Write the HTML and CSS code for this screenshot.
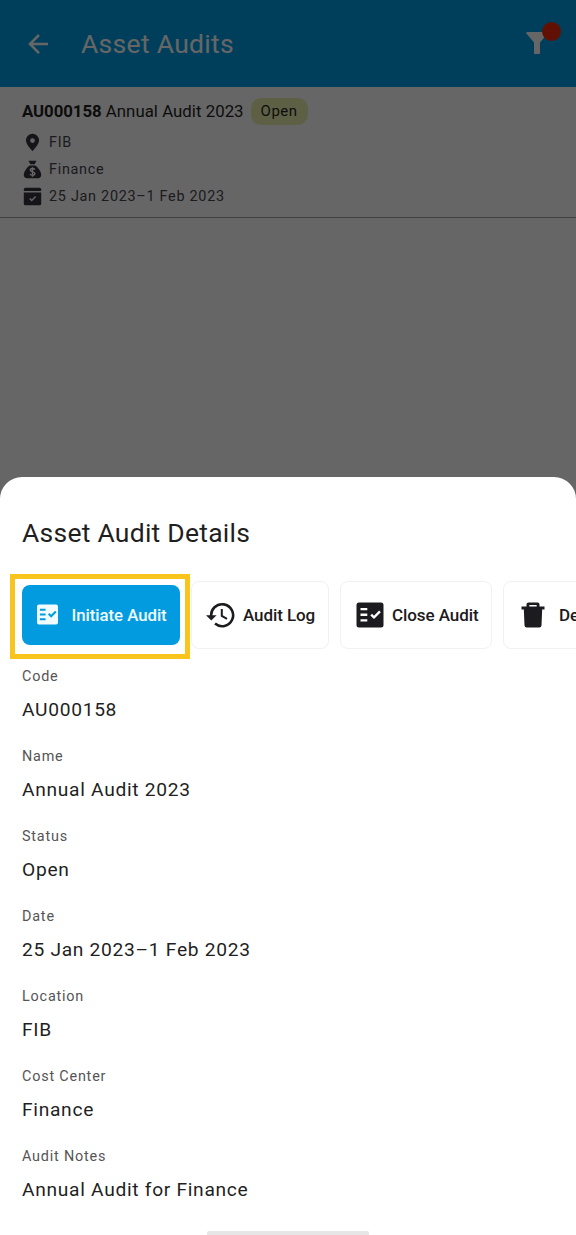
FILE: index.html
```html
<!DOCTYPE html>
<html lang="en">
<head>
<meta charset="utf-8">
<title>Asset Audits</title>
<link rel="stylesheet" href="styles.css">
</head>
<body>
<div class="screen">
  <header class="appbar">
    <svg class="back" viewBox="0 0 24 24"><path d="M20 11v2H8l5.500 5.500-1.420 1.420L4.160 12l7.920-7.920L13.500 5.500 8 11h12z"/></svg>
    <h1 class="appbar-title">Asset Audits</h1>
    <div class="filter">
      <svg class="filter-icon" viewBox="0 0 22 22"><path d="M1.400 0h19.200q1.700.4.8 1.800L14 10.600V21q0 1-1 1H9q-1 0-1-1V10.600L.6 1.800Q-.3.400 1.400 0z"/></svg>
      <span class="filter-dot"></span>
    </div>
  </header>
  <section class="audit">
    <div class="audit-head"><span class="audit-name"><b>AU000158</b> Annual Audit 2023</span><span class="chip">Open</span></div>
    <div class="meta"><svg viewBox="0 0 24 24"><path d="M12 12.500A3 3 0 0 1 9 9.500a3 3 0 0 1 3-3 3 3 0 0 1 3 3 3 3 0 0 1-3 3M12 1A8.300 8.300 0 0 0 3.700 9.300C3.700 15 12 23 12 23s8.300-8 8.300-13.700A8.300 8.300 0 0 0 12 1z"/></svg><span>FIB</span></div>
    <div class="meta"><svg viewBox="0 0 24 24"><path d="M7 1h10l-2.300 4.500H9.300z"/><path d="M8.500 7h7C19 9.500 23 14.500 23 19c0 2.500-1.500 4-4 4H5c-2.500 0-4-1.500-4-4C1 14.500 5 9.500 8.500 7z"/><path class="cut" d="M15 12c-.7-1-1.700-1.300-3-1.300-1.700 0-2.800.8-2.800 2 0 3 5.800 1.500 5.800 4.500 0 1.300-1.200 2.100-3 2.100-1.400 0-2.500-.5-3.200-1.500M12 9v12"/></svg><span>Finance</span></div>
    <div class="meta"><svg viewBox="0 0 24 24"><path d="M3 1h18q2 0 2 2v2H1V3q0-2 2-2zM1 7h22v14q0 2-2 2H3q-2 0-2-2z"/><path class="cut" d="M8.500 14.500l2.500 2.500 5-5"/></svg><span>25 Jan 2023–1 Feb 2023</span></div>
  </section>
  <div class="scrim"></div>

  <main class="sheet">
    <h2 class="sheet-title">Asset Audit Details</h2>
    <div class="actions">
      <div class="highlight">
        <button class="btn primary"><svg viewBox="0 0 24 22"><path fill-rule="evenodd" d="M3 .5h18q2 0 2 2v17q0 2-2 2H3q-2 0-2-2v-17q0-2 2-2zM4 5v2h6V5zm0 5v2h6v-2zm0 5v2h6v-2zM14 9.500L12.500 11l3.300 3.300 5.700-5.700L20 7.100l-4.200 4.200z"/></svg><span>Initiate Audit</span></button>
      </div>
      <button class="btn log"><svg viewBox="0 0 30 26"><path class="ring" d="M5.200 14.500A11 11 0 1 1 9 21.600"/><path d="M0 13.200h10.600l-5.300 5.400z"/><path class="hand" d="M15.800 7v6.800l5.200 3"/></svg><span>Audit Log</span></button>
      <button class="btn close"><svg viewBox="0 0 28 26"><path fill-rule="evenodd" d="M3 .5h22q2.500 0 2.500 2.500v20q0 2.500-2.500 2.500H3Q.5 25.500.5 23V3Q.5.500 3 .5zM4.500 6v2.300h6.800V6zm0 5.600v2.300h6.800v-2.300zm0 5.600v2.300h6.800v-2.300zM16 11.700l-1.700 1.700 3.700 3.700 6.800-6.800-1.700-1.700-5.100 5.100z"/></svg><span>Close Audit</span></button>
      <button class="btn delete"><svg viewBox="0 0 24 26"><path fill-rule="evenodd" d="M5.500 4.500V2.500Q5.500.500 7.500.500h9q2 0 2 2v2H23.500v3H.5v-3zM8.300 3v1.500h7.400V3zM2.800 7h18.400l-.7 16.500q-.2 2-2.200 2H5.700q-2 0-2.200-2z" fill-opacity="1"/><path d="M3 7h18v2H3z"/></svg><span>Delete</span></button>
    </div>
    <dl class="details">
      <div class="field"><dt>Code</dt><dd>AU000158</dd></div>
      <div class="field"><dt>Name</dt><dd>Annual Audit 2023</dd></div>
      <div class="field"><dt>Status</dt><dd>Open</dd></div>
      <div class="field"><dt>Date</dt><dd>25 Jan 2023–1 Feb 2023</dd></div>
      <div class="field"><dt>Location</dt><dd>FIB</dd></div>
      <div class="field"><dt>Cost Center</dt><dd>Finance</dd></div>
      <div class="field"><dt>Audit Notes</dt><dd>Annual Audit for Finance</dd></div>
    </dl>
    <div class="home-bar"></div>
  </main>
</div>
</body>
</html>
```
FILE: styles.css
```css
* { box-sizing: border-box; }
body { margin: 0; font-family: Roboto, "Liberation Sans", sans-serif; color: #1f1f1f; }
.screen { position: relative; display: flex; flex-direction: column; width: 576px; height: 1235px; background: #fff; overflow: hidden; }

.appbar { display: flex; align-items: center; flex: none; height: 87px; padding: 0 14px 0 23px; background: #009ee3; }
.back { width: 30px; height: 30px; fill: #fff; }
.appbar-title { flex: 1; margin: 0 0 0 28px; font-size: 26.5px; font-weight: 400; line-height: 32px; letter-spacing: 0.3px; color: #fff; }
.filter { position: relative; width: 36px; height: 44px; padding: 10px 0 0; }
.filter-icon { display: block; width: 22px; height: 22px; fill: #fff; }
.filter-dot { position: absolute; left: 16px; top: 0; width: 19px; height: 19px; border-radius: 50%; background: #f32b0c; }

.audit { flex: none; height: 131px; padding: 10px 22px 0; border-bottom: 1px solid #a0a0a0; }
.audit-head { display: flex; align-items: center; gap: 7px; height: 28px; margin-bottom: 4px; }
.audit-name { font-size: 16.8px; line-height: 24px; letter-spacing: 0.04px; white-space: nowrap; }
.audit-name b { font-weight: 700; letter-spacing: -0.05px; }
.chip { height: 27px; margin-top: 1px; padding: 0 10px; border-radius: 10px; background: #eaf0b0; font-size: 15px; line-height: 27px; letter-spacing: 0.5px; }
.meta { display: flex; align-items: center; gap: 7px; height: 27.2px; padding-left: 1px; font-size: 14.4px; letter-spacing: 0.72px; color: #49454f; }
.meta svg { width: 19px; height: 19px; fill: #37333f; }
.meta .cut { fill: none; stroke: #fff; stroke-width: 1.8; }
.scrim { position: absolute; inset: 0; background: rgba(0, 0, 0, 0.6); }

.sheet { position: relative; display: flex; flex-direction: column; height: 758px; margin-top: auto; padding: 37px 0 0; border-radius: 22px 22px 0 0; background: #fff; }
.sheet-title { margin: 0 22px; height: 37px; font-size: 26.5px; font-weight: 400; line-height: 38px; letter-spacing: 0.25px; }
.actions { display: flex; align-items: center; height: 85px; margin: 23px 0 0 10px; }
.highlight { flex: none; width: 180px; height: 85px; padding: 5.5px 5px 9px 6.5px; border: 5px solid #f9c51d; }
.btn { display: flex; align-items: center; flex: none; height: 68px; border: 1.5px solid #f1f1f3; border-radius: 8px; background: #fff; color: #1c1b20; font-family: inherit; font-size: 17px; font-weight: 500; letter-spacing: -0.08px; white-space: nowrap; }
.btn svg { flex: none; fill: currentColor; }
.primary { width: 158.5px; height: 60px; padding: 0 0 0 14.5px; gap: 12.5px; border: 0; background: #039be0; color: #f0fcff; font-size: 16.8px; letter-spacing: -0.04px; }
.primary svg { width: 23px; height: 21px; }
.log { width: 138px; margin: -4px 0 0 1px; padding: 0 0 0 14px; gap: 7px; }
.log svg { width: 30px; height: 26px; }
.ring { fill: none; stroke: currentColor; stroke-width: 2.6; }
.hand { fill: none; stroke: currentColor; stroke-width: 2; }
.close { width: 152px; margin: -4px 0 0 11px; padding: 0 0 0 15px; gap: 8px; }
.close svg { width: 28px; height: 26px; }
.delete { width: 130px; margin: -4px 0 0 11px; padding: 0 0 0 17px; gap: 14px; }
.delete svg { width: 24px; height: 26px; }

.details { margin: 8px 22px 0; }
.field { height: 80px; }
dt { height: 20px; font-size: 14.4px; line-height: 20px; letter-spacing: 0.8px; color: #555; }
dd { margin: 9px 0 0; font-size: 19.2px; line-height: 28px; letter-spacing: 0.7px; }
.home-bar { position: absolute; left: 207px; bottom: 0; width: 162px; height: 4px; border-radius: 2px 2px 0 0; background: #e6e6e6; }
```
